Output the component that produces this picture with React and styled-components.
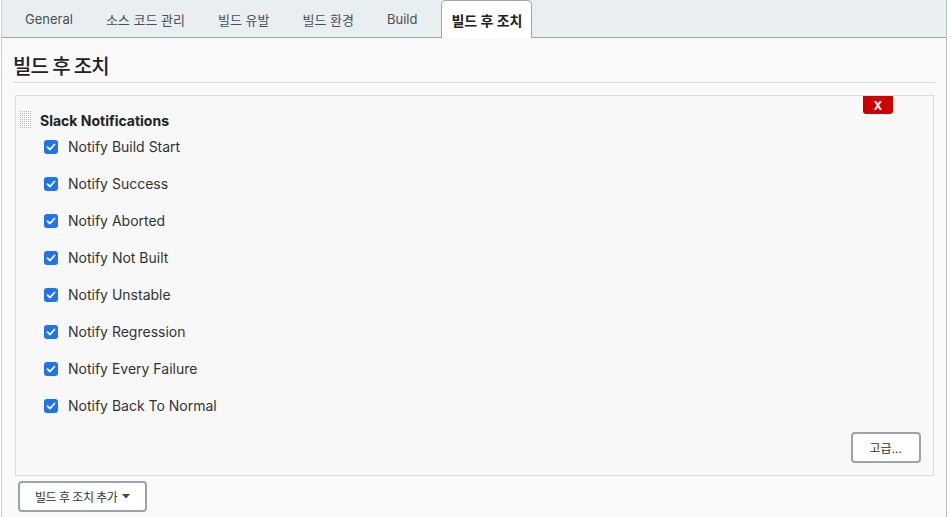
import React from "react"
import styled, { createGlobalStyle } from "styled-components"

const GlobalStyle = createGlobalStyle`
  html, body {
    margin: 0;
    padding: 0;
    background: #fff;
  }
  body {
    font-family: "Inter", "Noto Sans CJK KR", sans-serif;
    color: #333;
  }
`

const Page = styled.div`
  width: 944px;
  height: 517px;
  margin-left: 1px;
  border-left: 1px solid #cfd3d6;
  border-right: 1px solid #b9bec2;
  background: #f9f9f9;
  overflow: hidden;
`

const TabBar = styled.nav`
  display: flex;
  align-items: flex-end;
  height: 38px;
  padding-left: 6.5px;
  background: #e9eef1;
  border-bottom: 1px solid #9ba7af;
  box-sizing: border-box;
`

const Tab = styled.div`
  height: ${(p) => (p.$active ? "37px" : "36px")};
  display: flex;
  align-items: center;
  padding: 0 ${(p) => (p.$active ? "9px" : "16.5px")};
  margin: ${(p) => (p.$active ? "0 0 -1px 7.5px" : "0")};
  font-size: ${(p) => (p.$active ? "14px" : "13px")};
  font-weight: ${(p) => (p.$active ? 700 : 400)};
  color: ${(p) => (p.$active ? "#222" : "#4a4f54")};
  background: ${(p) => (p.$active ? "#fff" : "transparent")};
  border: ${(p) => (p.$active ? "1px solid #9ba7af" : "none")};
  border-bottom: none;
  border-radius: 5px 5px 0 0;
`

const Content = styled.main`
  padding: 0 11px;
`

const Heading = styled.h2`
  margin: 0;
  height: 45px;
  box-sizing: border-box;
  padding-top: 17px;
  line-height: 24px;
  font-size: 20px;
  font-weight: 500;
  letter-spacing: -1px;
  color: #222;
  border-bottom: 1px solid #d9dcde;
`

const Section = styled.section`
  margin: 12px 1px 0 2px;
  height: 381px;
  box-sizing: border-box;
  border: 1px solid #dcdcdc;
  background: #f8f8f8;
  position: relative;
  display: flex;
  flex-direction: column;
`

const DeleteButton = styled.button`
  position: absolute;
  top: 0;
  right: 40px;
  width: 30px;
  height: 18px;
  padding: 0;
  border: none;
  border-radius: 0 0 3px 3px;
  background: #cc0000;
  color: #fff;
  font-family: "Inter", sans-serif;
  font-size: 12px;
  font-weight: 700;
`

const TitleRow = styled.div`
  display: flex;
  align-items: center;
  gap: 8px;
  margin: 15px 0 0 4px;
`

const Title = styled.div`
  font-size: 14px;
  font-weight: 700;
  color: #222;
`

const List = styled.ul`
  list-style: none;
  margin: 9px 0 0 28px;
  padding: 0;
  display: flex;
  flex-direction: column;
  gap: 20px;
`

const Item = styled.li`
  display: flex;
  align-items: center;
  gap: 10px;
  height: 17px;
  font-size: 14px;
  color: #333;
`

const Box = styled.span`
  width: 14px;
  height: 14px;
  border-radius: 3px;
  background: #1f74e8;
  display: flex;
  align-items: center;
  justify-content: center;
`

const Footer = styled.div`
  margin-top: auto;
  display: flex;
  justify-content: flex-end;
  padding: 0 12px 12px 0;
`

const Button = styled.button`
  height: 31px;
  padding: 0 ${(p) => p.$pad || "16px"};
  background: #fff;
  border: 2px solid #9aa4ab;
  border-radius: 4px;
  font-family: "Inter", "Noto Sans CJK KR", sans-serif;
  font-size: 12px;
  letter-spacing: ${(p) => p.$ls || "0"};
  color: #333;
  display: flex;
  align-items: center;
  gap: 5px;
`

const AddRow = styled.div`
  margin: 5px 0 0 5px;
`

const items = [
  "Notify Build Start",
  "Notify Success",
  "Notify Aborted",
  "Notify Not Built",
  "Notify Unstable",
  "Notify Regression",
  "Notify Every Failure",
  "Notify Back To Normal",
]

const tabs = ["General", "소스 코드 관리", "빌드 유발", "빌드 환경", "Build", "빌드 후 조치"]

const Handle = () => {
  const dots = []
  for (let r = 0; r < 9; r++) {
    for (let c = 0; c < 6; c++) {
      dots.push(<rect key={r + "-" + c} x={c * 2} y={r * 2} width="1" height="1" fill="#b4b4b4" />)
    }
  }
  return (
    <svg width="12" height="18" viewBox="0 0 12 18">
      {dots}
    </svg>
  )
}

const Check = () => (
  <Box>
    <svg width="10" height="10" viewBox="0 0 10 10">
      <path d="M1.5 5.2 L4 7.5 L8.5 2.5" fill="none" stroke="#fff" strokeWidth="1.8" strokeLinecap="round" strokeLinejoin="round" />
    </svg>
  </Box>
)

export default function App() {
  return (
    <>
      <GlobalStyle />
      <Page>
        <TabBar>
          {tabs.map((t, i) => (
            <Tab key={t} $active={i === tabs.length - 1}>{t}</Tab>
          ))}
        </TabBar>
        <Content>
          <Heading>빌드 후 조치</Heading>
          <Section>
            <DeleteButton>X</DeleteButton>
            <TitleRow>
              <Handle />
              <Title>Slack Notifications</Title>
            </TitleRow>
            <List>
              {items.map((it) => (
                <Item key={it}>
                  <Check />
                  {it}
                </Item>
              ))}
            </List>
            <Footer>
              <Button $pad="17px">고급...</Button>
            </Footer>
          </Section>
          <AddRow>
            <Button $pad="15px" $ls="-0.5px">
              빌드 후 조치 추가
              <svg width="8" height="5" viewBox="0 0 8 5"><path d="M0 0 L8 0 L4 4.5 Z" fill="#444" /></svg>
            </Button>
          </AddRow>
        </Content>
      </Page>
    </>
  )
}
